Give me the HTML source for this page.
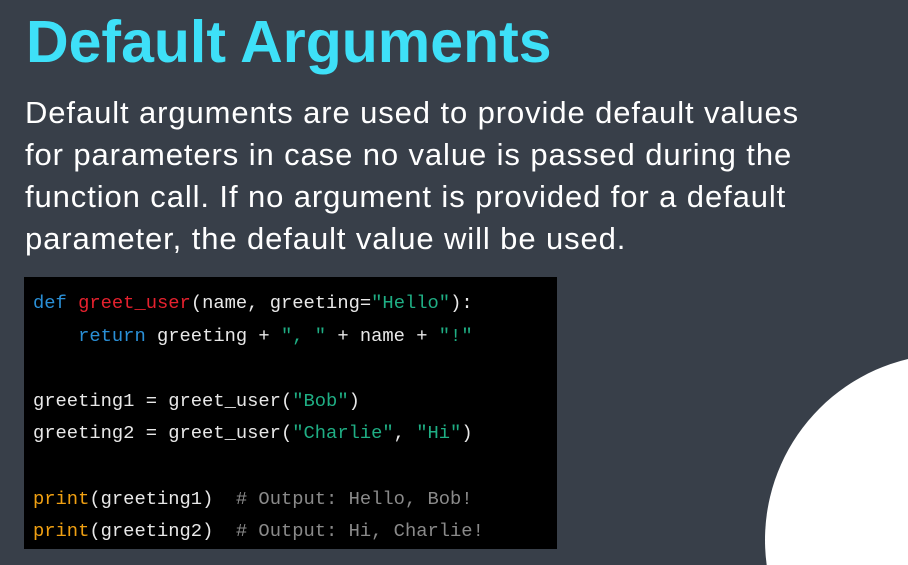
<!DOCTYPE html>
<html><head><meta charset="utf-8"><style>
html,body{margin:0;padding:0;width:908px;height:565px;overflow:hidden}
body{background:#383f49;position:relative;font-family:"Liberation Sans",sans-serif}
.wrap{position:absolute;left:0;top:0;width:908px;height:565px;overflow:hidden}
h1{position:absolute;left:26px;top:12px;margin:0;font-size:59px;line-height:60px;font-weight:bold;color:#3ee0f8;white-space:nowrap}
.p{position:absolute;left:25px;top:92px;font-size:31px;line-height:42px;letter-spacing:0.9px;color:#fff;margin:0;white-space:nowrap}
.code{position:absolute;left:24px;top:277px;width:533px;height:272px;background:#000}
pre{position:absolute;left:9px;top:10px;margin:0;font-family:"Liberation Mono",monospace;font-size:18.8px;line-height:32.6px;color:#e8e8e8}
.k{color:#2a8fd6}.f{color:#e5212e}.s{color:#1fae84}.o{color:#f0a012}.c{color:#8a8a8a}
svg{position:absolute;left:0;top:0;display:block}
</style></head><body><div class="wrap">
<svg width="908" height="565" viewBox="0 0 908 565"><path d="M908 565 L908 359 A186 186 0 0 0 766.7 565 Z" fill="#fff"/></svg>
<h1>Default Arguments</h1>
<p class="p">Default arguments are used to provide default values<br>for parameters in case no value is passed during the<br>function call. If no argument is provided for a default<br>parameter, the default value will be used.</p>
<div class="code"><pre><span class="k">def</span> <span class="f">greet_user</span>(name, greeting=<span class="s">"Hello"</span>):
    <span class="k">return</span> greeting + <span class="s">", "</span> + name + <span class="s">"!"</span>

greeting1 = greet_user(<span class="s">"Bob"</span>)
greeting2 = greet_user(<span class="s">"Charlie"</span>, <span class="s">"Hi"</span>)

<span class="o">print</span>(greeting1)  <span class="c"># Output: Hello, Bob!</span>
<span class="o">print</span>(greeting2)  <span class="c"># Output: Hi, Charlie!</span></pre></div>
</div></body></html>
